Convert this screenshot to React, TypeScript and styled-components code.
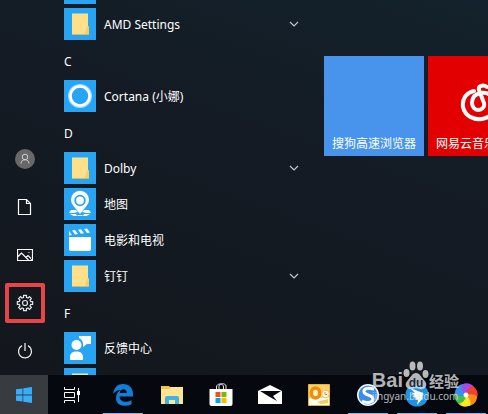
import React from "react";
import styled, { createGlobalStyle } from "styled-components";

const Global = createGlobalStyle`
  * { box-sizing: border-box; }
  html, body { margin: 0; overflow: hidden; background: #141b24; }
  body { font-family: "Noto Sans", "Noto Sans CJK SC", sans-serif; font-size: 12px; color: #fff; }
  button { font: inherit; color: inherit; border: 0; padding: 0; background: none; }
  svg { display: block; }
`;

const Desktop = styled.div`
  position: relative;
  display: flex;
  flex-direction: column;
  height: 100vh;
`;

const StartMenu = styled.main`
  flex: 1;
  min-height: 0;
  display: flex;
  overflow: hidden;
  background: linear-gradient(20deg, #13171d 0%, #141b24 60%, #13222c 100%);
`;

const Rail = styled.nav`
  flex: none;
  width: 48px;
  display: flex;
  flex-direction: column;
  justify-content: flex-end;
`;

const RailButton = styled.button<{ $marked?: boolean }>`
  height: 48px;
  display: grid;
  place-items: center;
  padding-left: 2px;
  ${(p) => p.$marked && `
    height: 40px;
    margin: 4px 3px 4px 5px;
    padding: 0;
    border: 4px solid #e84548;
    border-radius: 2px;
  `}
`;

const AppList = styled.section`
  flex: none;
  width: 248px;
  margin: -30px 12px 0 16px;
`;

const LetterHead = styled.h2`
  margin: 0;
  height: 36px;
  padding-top: 4px;
  line-height: 32px;
  font-size: 12px;
  font-weight: 400;
`;

const AppRow = styled.button`
  width: 100%;
  height: 36px;
  display: flex;
  align-items: center;
  gap: 8px;
  padding-right: 13px;
  text-align: left;
`;

const AppIcon = styled.span`
  width: 32px;
  height: 32px;
  background: #27a5f4;
`;

const AppName = styled.span`
  flex: 1;
  padding-top: 2px;
  line-height: 16px;
`;

const Tiles = styled.section`
  flex: 1;
  min-width: 0;
  display: flex;
  gap: 4px;
  padding-top: 56px;
  overflow: hidden;
`;

const Tile = styled.button<{ $color: string }>`
  flex: none;
  width: 100px;
  height: 100px;
  display: flex;
  flex-direction: column;
  justify-content: flex-end;
  padding: 0 8px 3px;
  background: ${(p) => p.$color};
  text-align: left;
  white-space: nowrap;
  line-height: 18px;
  & > svg { align-self: center; margin-bottom: 12px; }
`;

const Taskbar = styled.footer`
  flex: none;
  height: 39px;
  display: flex;
  overflow: hidden;
  background: #05080f;
`;

const SystemButton = styled.button<{ $active?: boolean }>`
  flex: none;
  width: 48px;
  display: grid;
  place-items: center;
  background: ${(p) => (p.$active ? "#383b40" : "transparent")};
`;

const PinnedApps = styled.div`
  display: flex;
  gap: 1px;
  padding-left: 3px;
`;

const PinnedApp = styled.button<{ $running?: boolean }>`
  flex: none;
  width: 48px;
  display: grid;
  place-items: center;
  background: linear-gradient(#76b9ed, #76b9ed) bottom / ${(p) => (p.$running ? "40px" : "0")} 1px no-repeat;
`;

const Watermark = styled.div`
  position: absolute;
  right: 29px;
  bottom: 11px;
  display: flex;
  flex-direction: column;
  color: rgba(225, 225, 225, 0.8);
  pointer-events: none;
`;

const MarkBrand = styled.div`
  display: flex;
  align-items: flex-end;
  justify-content: space-between;
  height: 29px;
`;

const Latin = styled.span`
  font: 700 20px/20px "Liberation Sans", sans-serif;
`;

const Hanzi = styled.span`
  font: 700 15px/18px "Noto Sans CJK SC", sans-serif;
`;

const MarkUrl = styled.div`
  font-size: 10px;
  line-height: 13px;
`;

const Folder = () => (
  <svg width="32" height="32" viewBox="0 0 32 32">
    <path d="M8 5.500h16V18l1 1v8H8z" fill="#ffe08a" />
    <path d="M22 21l2-3 1 1v8h-4z" fill="#f7cc62" />
    <path d="M8 26h17v1H8z" fill="#e0b65a" />
  </svg>
);

const Cortana = () => (
  <svg width="32" height="32" viewBox="0 0 32 32" fill="none">
    <circle cx="16" cy="16" r="11" stroke="#a9dcfb" strokeWidth="2" />
    <circle cx="16" cy="16" r="9.500" stroke="#fff" strokeWidth="2.500" />
  </svg>
);

const MapPin = () => (
  <svg width="32" height="32" viewBox="0 0 32 32">
    <path d="M5 25l2-3 5 0 2 2-4 1zM27 25l-2-3-5 0-2 2 4 1zM6 26h6l1 2-4-.3zM26 26h-6l-1 2 4-.3zM13 27h6l-1 1h-4z" fill="#fff" />
    <path d="M16 26l-6.500-8a9 9 0 1 1 13 0z" fill="#fff" />
    <circle cx="16" cy="12.500" r="4.800" fill="none" stroke="#27a5f4" strokeWidth="1.800" />
  </svg>
);

const Film = () => (
  <svg width="32" height="32" viewBox="0 0 32 32" fill="#fff">
    <path d="M5 13h22v12a2 2 0 0 1-2 2H7a2 2 0 0 1-2-2z" />
    <path d="M5 7l3 4-3 .5zM8 6.500l3-.4 3 4-3 .4zM14 5.700l3-.4 3 4-3 .4zM20 4.900l3-.4 3 4-3 .4z" />
  </svg>
);

const Feedback = () => (
  <svg width="32" height="32" viewBox="0 0 32 32" fill="#fff">
    <circle cx="12.500" cy="13" r="5" />
    <path d="M6 28v-3c0-4 3-5.500 6.500-5.500S19 21 19 25v3zM15 4h12v8h-4l-4 3v-3c0-3-2-5-4-6z" />
  </svg>
);

const Chevron = () => (
  <svg width="10" height="6" viewBox="0 0 10 6" fill="none" stroke="#c5c8cb" strokeWidth="1.200">
    <path d="M1 1l4 4 4-4" />
  </svg>
);

const User = () => (
  <svg width="20" height="20" viewBox="0 0 20 20" fill="none">
    <circle cx="10" cy="10" r="10" fill="#686868" />
    <circle cx="10" cy="8" r="2.800" stroke="#d0d0d0" />
    <path d="M6 14.500c0-5 8-5 8 0" stroke="#d0d0d0" />
  </svg>
);

const Document = () => (
  <svg width="16" height="18" viewBox="0 0 16 18" fill="none" stroke="#fff" strokeWidth="1.200">
    <path d="M1.500 1.500h8l4 4v11h-12zM9.500 1.500v4h4" />
  </svg>
);

const Picture = () => (
  <svg width="16" height="14" viewBox="0 0 16 14" fill="none" stroke="#fff" strokeWidth="1.200">
    <path d="M.5 1.500h15v11H.5zM.5 9l4-4 7 7M9 9.500l2-2 4.500 4.500" />
    <path d="M11.500 4.500h1" />
  </svg>
);

const teeth = Array.from({ length: 8 }, (_, i) => {
  const p = (r: number, deg: number) => {
    const a = ((i * 45 + deg) * Math.PI) / 180;
    return `${(9 + r * Math.cos(a)).toFixed(2)} ${(9 + r * Math.sin(a)).toFixed(2)}`;
  };
  return `${i ? "L" : "M"}${p(5.8, -14)}L${p(7.8, -11)}L${p(7.8, 11)}L${p(5.8, 14)}`;
}).join("") + "Z";

const Gear = () => (
  <svg width="18" height="18" viewBox="0 0 18 18" fill="none" stroke="#e6e6e6" strokeWidth="1.200" strokeLinejoin="round">
    <path d={teeth} />
    <circle cx="9" cy="9" r="2.500" />
  </svg>
);

const Power = () => (
  <svg width="16" height="18" viewBox="0 0 16 18" fill="none" stroke="#e6e6e6" strokeWidth="1.300">
    <path d="M8 1v8M5 3.700a6.500 6.500 0 1 0 6 0" />
  </svg>
);

const Windows = () => (
  <svg width="16" height="16" viewBox="0 0 16 16" fill="#38aefb">
    <path d="M0 2.300l6.500-.9v6.200H0zM7.300 1.300L16 0v7.600H7.300zM0 8.400h6.500v6.200L0 13.700zM7.300 8.400H16V16l-8.700-1.300z" />
  </svg>
);

const TaskView = () => (
  <svg width="16" height="16" viewBox="0 0 16 16" fill="none" stroke="#fff">
    <path d="M.5 0v2.500h10V0M.5 16v-2.500h10V16M.5 5.500h10v5H.5zM14.500 1v14" />
    <path d="M13 4h3v4h-3z" fill="#fff" stroke="none" />
  </svg>
);

const Edge = () => (
  <svg width="20" height="22" viewBox="0 0 20 22">
    <path d="M0 10C1 4 4 0 10 0c6 0 10 4 10 10v2.500H6.500c.3 6 7.500 6.500 12 3.700v4C12 23.500 3 22 3 14c0-4 2-6.500 5-8C4 6 2 7.500 0 10zM6.800 9h7c0-5-6.500-5-7 0z" fill="#0f7fdc" />
  </svg>
);

const Explorer = () => (
  <svg width="22" height="18" viewBox="0 0 22 18">
    <path d="M0 0h8l1 1h13v17H0z" fill="#f3c546" />
    <path d="M0 3h8l2-2h12v17H0z" fill="#ffe592" />
    <path d="M4 18v-6a2 2 0 0 1 2-2h10a2 2 0 0 1 2 2v6h-4v-4H8v4z" fill="#3fb2e8" />
  </svg>
);

const Store = () => (
  <svg width="24" height="23" viewBox="0 0 24 23">
    <path d="M7.500 7V4c0-4 7-4 7 0v3M10 6V3c0-3 7-3 7 0v4" fill="none" stroke="#e8e8e8" />
    <path d="M.5 6h23v15a2 2 0 0 1-2 2h-19a2 2 0 0 1-2-2z" fill="#fff" />
    <path d="M6.500 9h5v5h-5z" fill="#f25022" />
    <path d="M12.500 9h5v5h-5z" fill="#7fba00" />
    <path d="M6.500 15h5v5h-5z" fill="#00a4ef" />
    <path d="M12.500 15h5v5h-5z" fill="#ffb900" />
  </svg>
);

const Mail = () => (
  <svg width="24" height="19" viewBox="0 0 24 19">
    <path d="M0 6l12-6 12 6v13H0z" fill="#fff" />
    <path d="M2 6h21l-8 5 4 5-8-4.500z" fill="#05080f" />
  </svg>
);

const Outlook = () => (
  <svg width="22" height="22" viewBox="0 0 22 22">
    <path d="M.5.5h21v21H.5z" fill="#fdd368" stroke="#f0b030" />
    <path d="M1 15l6-2 5 1 9-1v8H1z" fill="#fff" />
    <path d="M9 18l11-3v4l-7 1z" fill="#fbc95a" />
    <ellipse cx="7.500" cy="9" rx="4.200" ry="5" fill="#fff0c0" stroke="#ee8c0c" strokeWidth="3.500" />
    <circle cx="17.500" cy="10" r="3.800" fill="#fffaf0" stroke="#f0b858" />
    <path d="M17 8v2.500h2" fill="none" stroke="#d98d13" />
  </svg>
);

const Sogou = () => (
  <svg width="22" height="22" viewBox="0 0 22 22">
    <circle cx="11" cy="11" r="11" fill="#f5faff" />
    <circle cx="11" cy="11" r="9.500" fill="#3b8ee8" />
    <path d="M17 5.500C12 3 6 4.500 7 8s9 3 9 7-7 4.500-11 2" fill="none" stroke="#fff" strokeWidth="3" />
  </svg>
);

const Ding = () => (
  <svg width="24" height="24" viewBox="0 0 24 24">
    <circle cx="12" cy="12" r="11.500" fill="#1e93e6" />
    <path d="M5 5l13 5c1 1 0 3-1 4l1 1-6 7 1-5-3-.5 1-1.500-4-2 3-.5-4-3 4 .5z" fill="#fff" />
  </svg>
);

const petals = ["#a64bea", "#f2402e", "#f98a1d", "#ffe81b", "#3fc24a", "#3c8df0"];
const Pinwheel = () => (
  <svg width="24" height="24" viewBox="0 0 24 24">
    {petals.map((c, i) => (
      <path key={c} d="M12 12C8 9 6.500 5 8 1.500 12-.5 17 0 20 4c-4 0-7 3-8 8z" fill={c} transform={`rotate(${i * 60} 12 12)`} />
    ))}
    <circle cx="12" cy="12" r="2.500" fill="#fff" />
  </svg>
);

const NetEase = () => (
  <svg width="40" height="42" viewBox="0 0 40 42" fill="none" stroke="#fff" strokeWidth="4" strokeLinecap="round">
    <path d="M16 10C8 12 4 18 5 26c2 9 10 13 19 12 8-1 14-8 13-16-1-7-7-11-14-10-6 1-9 5-9 10 0 4 3 7 6 7 4 0 7-3 6-7L21 9c-1-4 4-6 8-3" />
  </svg>
);

const Paw = () => (
  <svg width="26" height="29" viewBox="0 0 26 29" fill="currentColor">
    <ellipse cx="3.500" cy="12" rx="3" ry="4" />
    <ellipse cx="9.500" cy="5" rx="3" ry="4.500" />
    <ellipse cx="17" cy="5" rx="3" ry="4.500" />
    <ellipse cx="22.500" cy="13" rx="3" ry="4" />
    <path d="M13 12c4 0 5 4 8 7 5 5 1 10-4 9-3-1-5-1-8 0-5 1-9-4-4-9 3-3 4-7 8-7z" />
    <text x="13" y="26" textAnchor="middle" fill="#1b2a3c" fontFamily="Liberation Sans, sans-serif" fontWeight="700" fontSize="12">du</text>
  </svg>
);

const apps = [
  {},
  { name: "AMD Settings", icon: <Folder />, group: true },
  { letter: "C" },
  { name: "Cortana (小娜)", icon: <Cortana /> },
  { letter: "D" },
  { name: "Dolby", icon: <Folder />, group: true },
  { name: "地图", icon: <MapPin /> },
  { name: "电影和电视", icon: <Film /> },
  { name: "钉钉", icon: <Folder />, group: true },
  { letter: "F" },
  { name: "反馈中心", icon: <Feedback /> },
  { icon: <Folder /> },
];

const rail = [
  { label: "用户", icon: <User /> },
  { label: "文档", icon: <Document /> },
  { label: "图片", icon: <Picture /> },
  { label: "设置", icon: <Gear />, marked: true },
  { label: "电源", icon: <Power /> },
];

const pinned = [
  { label: "Edge", icon: <Edge />, running: true },
  { label: "文件资源管理器", icon: <Explorer /> },
  { label: "Store", icon: <Store /> },
  { label: "邮件", icon: <Mail /> },
  { label: "Outlook", icon: <Outlook /> },
  { label: "搜狗", icon: <Sogou />, running: true },
  { label: "钉钉", icon: <Ding />, running: true },
  { label: "相册", icon: <Pinwheel />, running: true },
];

export default function App() {
  return (
    <Desktop>
      <Global />
      <StartMenu>
        <Rail>
          {rail.map((r) => (
            <RailButton key={r.label} aria-label={r.label} $marked={r.marked}>{r.icon}</RailButton>
          ))}
        </Rail>
        <AppList>
          {apps.map((a, i) =>
            a.letter ? (
              <LetterHead key={i}>{a.letter}</LetterHead>
            ) : (
              <AppRow key={i}>
                <AppIcon>{a.icon}</AppIcon>
                <AppName>{a.name}</AppName>
                {a.group && <Chevron />}
              </AppRow>
            )
          )}
        </AppList>
        <Tiles>
          <Tile $color="#4894ec">搜狗高速浏览器</Tile>
          <Tile $color="#e20000"><NetEase />网易云音乐</Tile>
        </Tiles>
      </StartMenu>
      <Taskbar>
        <SystemButton $active aria-label="开始"><Windows /></SystemButton>
        <SystemButton aria-label="任务视图"><TaskView /></SystemButton>
        <PinnedApps>
          {pinned.map((p) => (
            <PinnedApp key={p.label} aria-label={p.label} $running={p.running}>{p.icon}</PinnedApp>
          ))}
        </PinnedApps>
      </Taskbar>
      <Watermark>
        <MarkBrand><Latin>Bai</Latin><Paw /><Hanzi>经验</Hanzi></MarkBrand>
        <MarkUrl>jingyan.baidu.com</MarkUrl>
      </Watermark>
    </Desktop>
  );
}
